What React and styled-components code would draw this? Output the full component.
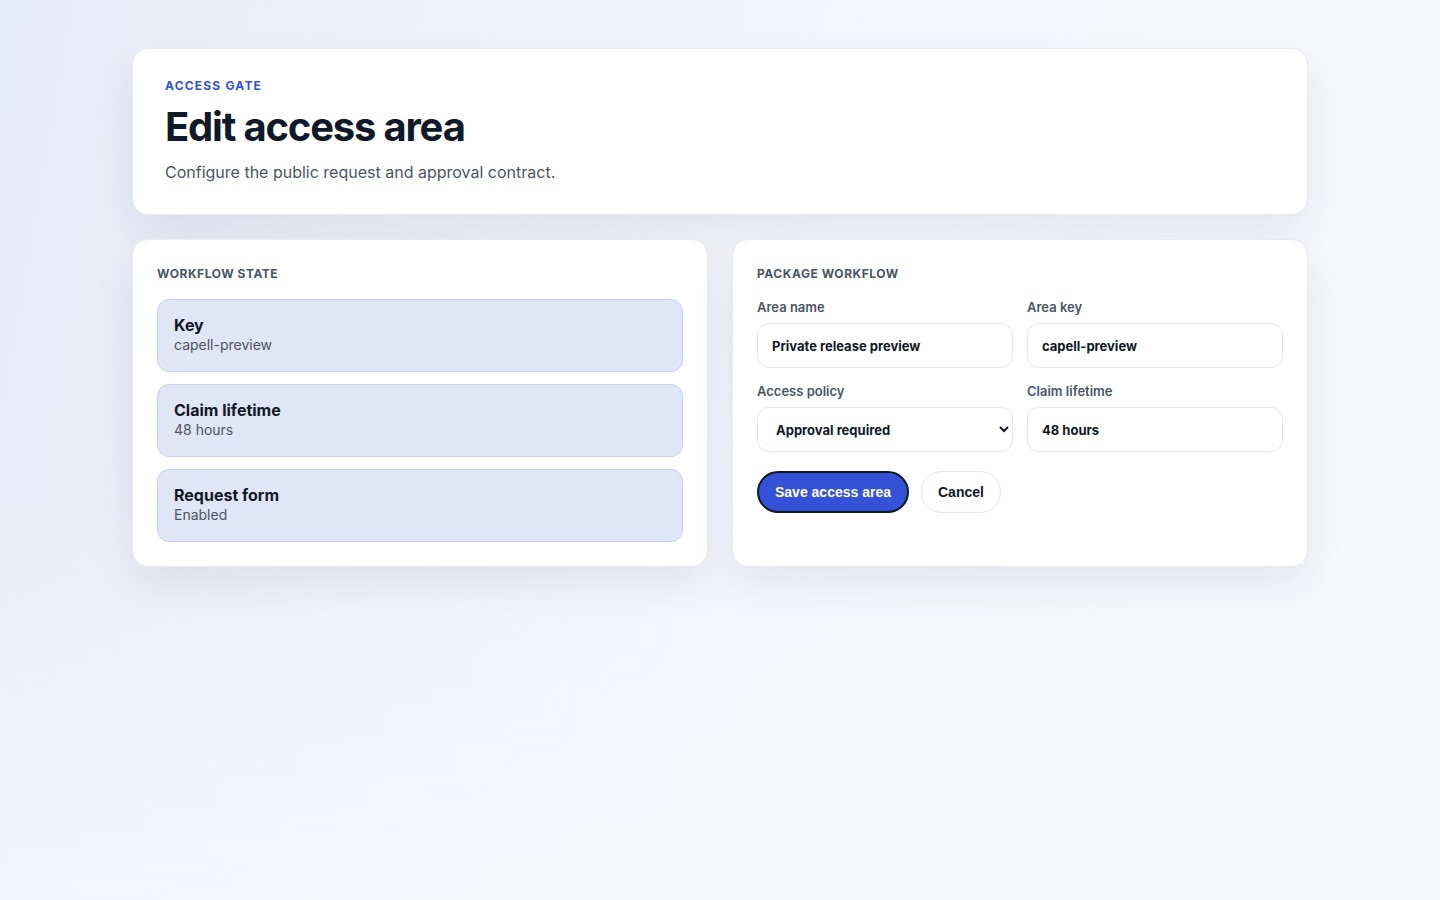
import styled, { createGlobalStyle } from "styled-components";

const GlobalStyle = createGlobalStyle`
  html, body {
    margin: 0;
    padding: 0;
  }
  body {
    min-height: 100vh;
    font-family: Inter, "Noto Sans", sans-serif;
    color: #111827;
    background:
      linear-gradient(180deg, rgba(248, 249, 252, 0) 55%, rgba(248, 249, 252, 0.7) 100%),
      linear-gradient(100deg, #e7eaf7 0%, #eef0f9 25%, #f5f6fb 55%, #f7f8fb 100%);
  }
`;

const Page = styled.main`
  min-height: 100vh;
  box-sizing: border-box;
  padding: 48px 0;
`;

const Shell = styled.div`
  width: 1176px;
  margin: 0 auto;
  display: flex;
  flex-direction: column;
  gap: 24px;
`;

const Card = styled.section`
  background: #ffffff;
  border: 1px solid #e8eaf0;
  border-radius: 16px;
  box-shadow: 0 18px 40px rgba(30, 41, 80, 0.08);
  box-sizing: border-box;
`;

const Header = styled(Card)`
  padding: 29px 32px 30px;
`;

const Eyebrow = styled.div`
  font-size: 12px;
  font-weight: 700;
  letter-spacing: 0.1em;
  color: #3451d1;
  text-transform: uppercase;
`;

const Title = styled.h1`
  margin: 12px 0 0;
  font-size: 40px;
  line-height: 44px;
  font-weight: 700;
  letter-spacing: -0.03em;
  color: #111827;
`;

const Subtitle = styled.p`
  margin: 11px 0 0;
  font-size: 16px;
  line-height: 24px;
  color: #4b5563;
`;

const Columns = styled.div`
  display: grid;
  grid-template-columns: 1fr 1fr;
  gap: 24px;
`;

const Panel = styled(Card)`
  padding: 26px 24px 24px;
`;

const PanelTitle = styled.h2`
  margin: 0 0 17px;
  font-size: 12px;
  line-height: 16px;
  font-weight: 700;
  letter-spacing: 0.045em;
  color: #4b5563;
  text-transform: uppercase;
`;

const StateList = styled.div`
  display: flex;
  flex-direction: column;
  gap: 12px;
`;

const StateItem = styled.div`
  background: #e0e5f8;
  border: 1px solid #c9d1ee;
  border-radius: 12px;
  padding: 15px 16px 16px;
  display: flex;
  flex-direction: column;
`;

const StateName = styled.strong`
  font-size: 16px;
  line-height: 20px;
  font-weight: 700;
  color: #111827;
`;

const StateValue = styled.span`
  font-size: 14px;
  line-height: 20px;
  color: #4b5563;
`;

const FormGrid = styled.div`
  display: grid;
  grid-template-columns: 1fr 1fr;
  column-gap: 14px;
  row-gap: 15px;
`;

const Field = styled.label`
  display: flex;
  flex-direction: column;
  gap: 8px;
`;

const FieldLabel = styled.span`
  font-size: 13px;
  line-height: 16px;
  font-weight: 600;
  color: #4b5563;
`;

const Input = styled.input`
  height: 45px;
  box-sizing: border-box;
  border: 1px solid #e5e7eb;
  border-radius: 12px;
  padding: 0 14px;
  font-family: Inter, "Noto Sans", sans-serif;
  font-size: 13px;
  font-weight: 700;
  color: #111827;
  background: #ffffff;
  outline: none;
`;

const Select = styled.select`
  height: 45px;
  box-sizing: border-box;
  border: 1px solid #e5e7eb;
  border-radius: 12px;
  padding: 0 14px;
  font-family: Inter, "Noto Sans", sans-serif;
  font-size: 13px;
  font-weight: 700;
  color: #111827;
  background: #ffffff;
  outline: none;
`;

const Actions = styled.div`
  display: flex;
  gap: 12px;
  margin-top: 19px;
`;

const Button = styled.button`
  height: 42px;
  padding: 0 16px;
  border-radius: 999px;
  font-family: "Liberation Sans", Arial, sans-serif;
  font-size: 14px;
  font-weight: 700;
  cursor: pointer;
  border: ${(p) => (p.$primary ? "2px solid #111827" : "1px solid #e5e7eb")};
  background: ${(p) => (p.$primary ? "#3352d6" : "#ffffff")};
  color: ${(p) => (p.$primary ? "#ffffff" : "#111827")};
`;

const states = [
  { name: "Key", value: "capell-preview" },
  { name: "Claim lifetime", value: "48 hours" },
  { name: "Request form", value: "Enabled" },
];

const App = () => {
  return (
    <>
      <GlobalStyle />
      <Page>
        <Shell>
          <Header>
            <Eyebrow>Access gate</Eyebrow>
            <Title>Edit access area</Title>
            <Subtitle>Configure the public request and approval contract.</Subtitle>
          </Header>
          <Columns>
            <Panel>
              <PanelTitle>Workflow state</PanelTitle>
              <StateList>
                {states.map((s) => (
                  <StateItem key={s.name}>
                    <StateName>{s.name}</StateName>
                    <StateValue>{s.value}</StateValue>
                  </StateItem>
                ))}
              </StateList>
            </Panel>
            <Panel>
              <PanelTitle>Package workflow</PanelTitle>
              <FormGrid>
                <Field>
                  <FieldLabel>Area name</FieldLabel>
                  <Input defaultValue="Private release preview" />
                </Field>
                <Field>
                  <FieldLabel>Area key</FieldLabel>
                  <Input defaultValue="capell-preview" />
                </Field>
                <Field>
                  <FieldLabel>Access policy</FieldLabel>
                  <Select defaultValue="approval">
                    <option value="approval">Approval required</option>
                    <option value="open">Open</option>
                  </Select>
                </Field>
                <Field>
                  <FieldLabel>Claim lifetime</FieldLabel>
                  <Input defaultValue="48 hours" />
                </Field>
              </FormGrid>
              <Actions>
                <Button $primary type="submit">Save access area</Button>
                <Button type="button">Cancel</Button>
              </Actions>
            </Panel>
          </Columns>
        </Shell>
      </Page>
    </>
  );
};

export default App;
